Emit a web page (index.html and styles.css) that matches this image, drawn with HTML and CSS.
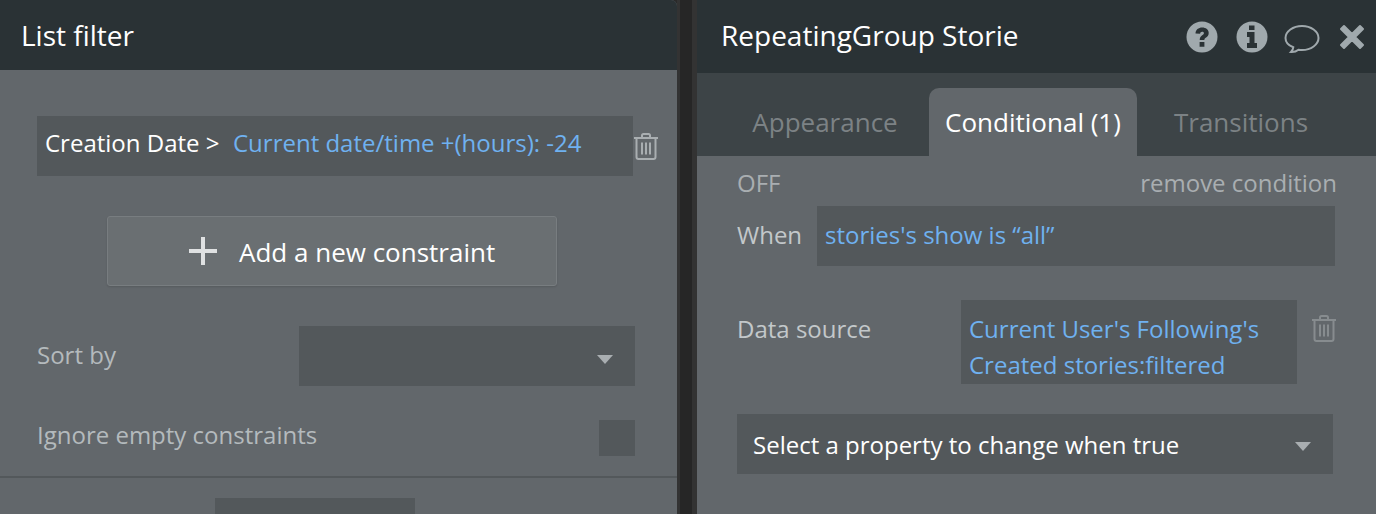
FILE: index.html
```html
<!DOCTYPE html>
<html lang="en">
<head>
<meta charset="utf-8">
<title>List filter</title>
<link rel="stylesheet" href="styles.css">
</head>
<body>
<div class="app">
  <section class="panel left">
    <header class="head"><h1>List filter</h1></header>
    <div class="body-left">
      <div class="constraint-row">
        <div class="constraint"><span class="white">Creation Date &gt;</span><span class="blue">Current date/time +(hours): -24</span></div>
        <svg class="trash" viewBox="0 0 26 28"><use href="#trash-icon"/></svg>
      </div>
      <button class="add"><svg class="plus" viewBox="0 0 28 28"><path d="M12 0h4v12h12v4H16v12h-4V16H0v-4h12z"/></svg><span class="add-text">Add a new constraint</span></button>
      <div class="sort-row">
        <span class="label">Sort by</span>
        <div class="sort-select"><i class="caret"></i></div>
      </div>
      <div class="ignore-row">
        <span class="label">Ignore empty constraints</span>
        <div class="check"></div>
      </div>
    </div>
    <div class="divider"></div>
    <div class="foot-block"></div>
  </section>
  <div class="gutter"></div>
  <section class="panel right">
    <header class="head head-right">
      <h1>RepeatingGroup Storie</h1>
      <div class="tools">
        <svg class="tool t1" viewBox="0 0 32 32"><circle cx="16" cy="16" r="15.500" fill="#a0a9ad"/><path d="M9.500 12.500c0-3.800 3-6 6.700-6 3.700 0 6.500 2.100 6.500 5.500 0 2.600-1.400 3.700-3 4.800-1 .7-1.300 1.100-1.300 2.200h-4.700c0-2.500.8-3.600 2.500-4.800 1.200-.8 1.700-1.300 1.700-2 0-.9-.8-1.400-1.800-1.400-1.200 0-1.900.8-2 1.900zM13.600 21h4.800v4.700h-4.800z" fill="#2a3235"/></svg>
        <svg class="tool t2" viewBox="0 0 32 32"><circle cx="16" cy="16" r="15.500" fill="#a0a9ad"/><path d="M13 4.500h5.500V9H13zM11 11h7.500v11H21v5H11v-5h2.500v-6H11z" fill="#2a3235"/></svg>
        <svg class="tool t3" viewBox="0 0 36 32"><path d="M7 30c1.500-1.500 2.200-3 2.300-4.700C4.500 23.500 1.500 20 1.500 16 1.500 9.500 9 4 18 4s16.500 5.500 16.500 12S27 28 18 28c-1.200 0-2.400-.1-3.500-.3C12.500 29.300 10 30.200 7 30z" fill="none" stroke="#a0a9ad" stroke-width="2"/></svg>
        <svg class="tool t4" viewBox="0 0 26 26"><path d="M5 2 13 10l8-8 3 3-8 8 8 8-3 3-8-8-8 8-3-3 8-8-8-8z" fill="#a0a9ad" stroke="#a0a9ad" stroke-width="2" stroke-linejoin="round"/></svg>
      </div>
    </header>
    <nav class="tabs">
      <span class="tab">Appearance</span>
      <span class="tab active">Conditional (1)</span>
      <span class="tab">Transitions</span>
    </nav>
    <div class="body-right">
      <div class="off-row"><span>OFF</span><span>remove condition</span></div>
      <div class="when-row">
        <span class="label light">When</span>
        <div class="when-input blue">stories's show is “all”</div>
      </div>
      <div class="source-row">
        <span class="label light source-label">Data source</span>
        <div class="source-input blue">Current User's Following's<br>Created stories:filtered</div>
        <svg class="trash trash-dim" viewBox="0 0 26 28"><use href="#trash-icon"/></svg>
      </div>
      <div class="prop-select"><span>Select a property to change when true</span><i class="caret"></i></div>
    </div>
  </section>
</div>
<svg class="defs" width="0" height="0">
  <symbol id="trash-icon" viewBox="0 0 26 28">
    <path d="M1 6h24M9 6V3.500Q9 2 10.500 2h5Q17 2 17 3.500V6M3.500 6v19q0 2 2 2h15q2 0 2-2V6M9 10.500v12M13 10.500v12M17 10.500v12" fill="none" stroke="currentColor" stroke-width="2"/>
  </symbol>
</svg>
</body>
</html>
```
FILE: styles.css
```css
* { box-sizing: border-box; }
html, body { margin: 0; height: 514px; overflow: hidden; }
body { font-family: "Open Sans", sans-serif; font-size: 24px; color: #fff; background: #2a2a2a; }
.app { display: flex; height: 514px; }
.panel { background: #62676b; overflow: hidden; }
.left { width: 677px; flex: none; border-top-right-radius: 6px; }
.right { flex: 1; min-width: 0; }
.gutter { width: 20px; flex: none; background: linear-gradient(90deg, #333 0 3px, #262626 3px 15px, #333 15px); }
.head { height: 70px; background: #2a3235; display: flex; align-items: center; padding: 0 0 0 21px; }
.head h1 { margin: 0; font-size: 28px; font-weight: 400; }
.head-right { height: 73px; padding: 0 0 3px 24px; justify-content: space-between; }
.tools { display: flex; align-items: center; margin-top: 3px; }
.tool { display: block; flex: none; }
.t1 { width: 32px; height: 32px; margin-right: 18px; }
.t2 { width: 32px; height: 32px; margin-right: 16px; }
.t3 { width: 36px; height: 32px; margin-right: 19px; margin-top: 3px; }
.t4 { width: 26px; height: 26px; margin-right: 11px; }
.white { color: #fff; margin-right: 13.500px; }
.blue { color: #6fb1f0; }
.label { color: #b4babd; }
.light { color: #c3c8ca; }
.body-left { padding: 46px 42px 0 37px; }
.constraint-row { display: flex; align-items: center; }
.constraint { width: 596px; height: 60px; flex: none; background: #53585b; display: flex; align-items: center; padding: 0 0 7px 8px; }
.trash { width: 26px; height: 28px; color: #a9aeb1; margin: 0; flex: none; }
.add { display: flex; align-items: center; width: 450px; height: 70px; margin: 40px 0 0 70px; padding: 0 0 0 81px; background: #6a6f72; border: 1px solid #787d80; border-radius: 3px; color: #fff; font: inherit; font-size: 26px; box-shadow: 0 1px 2px rgba(0,0,0,.12); }
.add-text { margin-top: 2px; }
.plus { width: 28px; height: 28px; fill: #dfe1e2; margin: 0 22px 0 0; flex: none; }
.sort-row { display: flex; align-items: center; justify-content: space-between; margin-top: 40px; height: 60px; }
.sort-row .label { margin-top: -4px; }
.sort-select { width: 336px; height: 60px; background: #53585b; position: relative; }
.caret { width: 0; height: 0; border-left: 8.500px solid transparent; border-right: 8.500px solid transparent; border-top: 9px solid #a9aeb1; display: block; }
.sort-select .caret { position: absolute; right: 22px; top: 29px; }
.ignore-row { display: flex; align-items: center; justify-content: space-between; margin-top: 34px; height: 36px; }
.ignore-row .label { margin-top: -8px; }
.check { width: 36px; height: 36px; background: #53585b; }
.divider { height: 2px; background: #53585b; margin-top: 20px; }
.foot-block { width: 200px; height: 40px; margin: 20px 0 0 215px; background: #53585b; }
.tabs { height: 83px; background: #3d4447; display: flex; align-items: flex-end; padding-left: 40px; font-size: 26px; }
.tab { height: 68px; color: #7c8285; text-align: center; line-height: 68px; white-space: nowrap; flex: none; }
.tab:first-child { width: 192px; padding-right: 16px; }
.tab.active { width: 208px; color: #fff; background: #62676b; border-radius: 10px 10px 0 0; }
.tab:last-child { width: 208px; }
.body-right { padding: 0 41px 0 40px; }
.off-row { display: flex; justify-content: space-between; color: #a9aeb1; height: 50px; padding-top: 9px; line-height: 36px; margin-right: -2px; }
.when-row { display: flex; align-items: center; height: 60px; }
.when-row .label { width: 80px; flex: none; margin-top: -3px; }
.when-input { width: 518px; flex: none; height: 60px; background: #53585b; padding: 0 8px 4px; display: flex; align-items: center; }
.source-row { display: flex; align-items: flex-start; margin-top: 34px; }
.source-label { width: 224px; flex: none; padding-top: 11px; line-height: 36px; }
.source-input { width: 336px; flex: none; height: 84px; background: #53585b; padding: 11px 8px 0; line-height: 36px; }
.trash-dim { color: #878c8f; margin: 14px 0 0 14px; }
.prop-select { width: 596px; height: 60px; margin-top: 30px; background: #53585b; display: flex; align-items: center; justify-content: space-between; padding: 0 22px 0 16px; }
.prop-select .caret { margin-top: 4px; }
.defs { position: absolute; }
```
